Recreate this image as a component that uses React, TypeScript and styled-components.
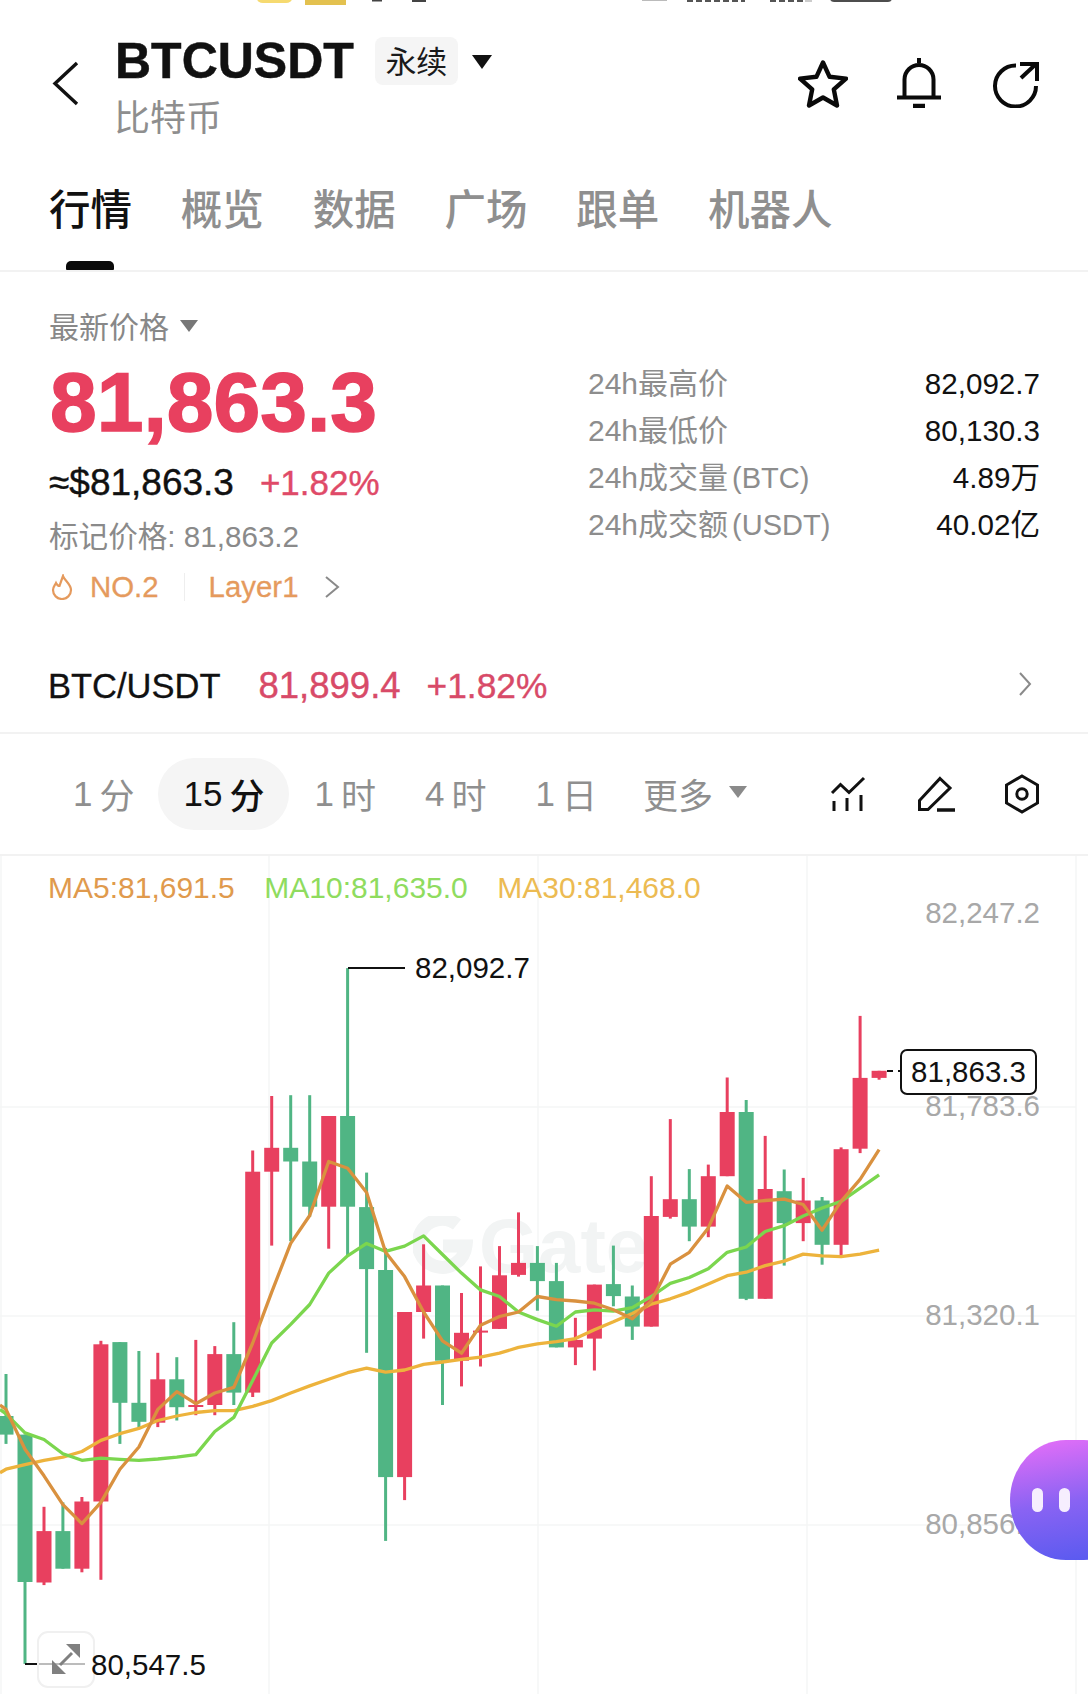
import React from "react";
import styled, { createGlobalStyle } from "styled-components";

const FONT = `"Liberation Sans", "Noto Sans CJK SC", sans-serif`;

const Global = createGlobalStyle`
  html, body { margin: 0; padding: 0; background: #fff; }
  body { font-family: ${FONT}; }
`;

const Page = styled.div`
  position: relative;
  width: 1088px;
  height: 1694px;
  overflow: hidden;
  background: #fff;
  color: #111;
`;

const Sliver = styled.svg`
  display: block;
  width: 1088px;
  height: 6px;
`;

const Header = styled.header`
  display: flex;
  align-items: flex-start;
  height: 135px;
  padding: 31px 48px 0 52px;
`;
const BackIcon = styled.svg`
  width: 28px;
  height: 45px;
  margin-top: 24px;
  flex: none;
`;
const TitleBlock = styled.div`
  margin-left: 35px;
`;
const TitleRow = styled.div`
  display: flex;
  align-items: center;
  height: 48px;
`;
const Symbol = styled.div`
  font-size: 50px;
  font-weight: 700;
  line-height: 48px;
  -webkit-text-stroke: 0.5px #111;
`;
const Kind = styled.div`
  display: flex;
  align-items: center;
  justify-content: center;
  width: 83px;
  height: 48px;
  padding-bottom: 3px;
  box-sizing: border-box;
  margin-left: 21px;
  border-radius: 8px;
  background: #f5f5f5;
  font-size: 31px;
  color: #1a1a1a;
`;
const Caret = styled.i<{ $size: number; $color: string }>`
  display: block;
  flex: none;
  width: 0;
  height: 0;
  border-left: ${(p) => p.$size}px solid transparent;
  border-right: ${(p) => p.$size}px solid transparent;
  border-top: ${(p) => Math.round(p.$size * 1.35)}px solid ${(p) => p.$color};
`;
const KindCaret = styled(Caret)`
  margin: 2px 0 0 14px;
`;
const Subtitle = styled.div`
  margin-top: 14px;
  margin-left: -1px;
  font-size: 36px;
  line-height: 40px;
  color: #8e8e8e;
`;
const Actions = styled.div`
  display: flex;
  gap: 46px;
  margin: 21px 0 0 auto;
`;
const ActionIcon = styled.svg`
  display: block;
  width: 50px;
  height: 50px;
`;

const Tabs = styled.nav`
  display: flex;
  gap: 48.8px;
  height: 83px;
  padding: 15px 0 0 49px;
  border-bottom: 2px solid #f2f2f2;
`;
const Tab = styled.div<{ $active?: boolean }>`
  display: flex;
  flex-direction: column;
  align-items: center;
  font-size: 41.500px;
  font-weight: 500;
  line-height: 48px;
  color: ${(p) => (p.$active ? "#111" : "#8f8f8f")};
`;
const TabMark = styled.span`
  display: block;
  width: 48px;
  height: 9px;
  margin: 26px 0 0 -2px;
  border-radius: 5px 5px 1px 1px;
  background: #0a0a0a;
`;

const Market = styled.section`
  display: flex;
  height: 368px;
  padding: 0 48px 0 49px;
`;
const MarketLeft = styled.div`
  width: 539px;
  flex: none;
`;
const PriceLabel = styled.div`
  display: flex;
  align-items: center;
  height: 40px;
  margin-top: 33px;
  font-size: 30px;
  color: #888;
`;
const LabelCaret = styled(Caret)`
  margin: 2px 0 0 11px;
`;
const BigPrice = styled.div`
  margin: 12px 0 0 1px;
  font-size: 84px;
  font-weight: 700;
  line-height: 90px;
  color: #e8405f;
  -webkit-text-stroke: 1.500px #e8405f;
`;
const FiatRow = styled.div`
  display: flex;
  align-items: baseline;
  gap: 26px;
  margin-top: 14px;
  font-size: 37px;
  line-height: 44px;
  -webkit-text-stroke: 0.4px currentColor;
`;
const Rise = styled.span`
  font-size: 35px;
  color: #df4a68;
`;
const MarkPrice = styled.div`
  margin-top: 12px;
  font-size: 29.600px;
  line-height: 40px;
  color: #8a8a8a;
`;
const TagRow = styled.div`
  display: flex;
  align-items: center;
  height: 34px;
  margin-top: 13px;
  font-size: 29.400px;
  color: #e59a5d;
  -webkit-text-stroke: 0.3px currentColor;
`;
const Flame = styled.svg`
  width: 24px;
  height: 26px;
  margin: 0 16px 0 1px;
  flex: none;
`;
const TagDivider = styled.span`
  width: 1px;
  height: 28px;
  margin: 0 24px 0 25px;
  background: #eee;
`;
const TagChevron = styled.svg`
  width: 16px;
  height: 22px;
  margin-left: 26px;
  flex: none;
`;
const Stats = styled.div`
  flex: 1;
  padding-top: 88px;
`;
const StatRow = styled.div`
  display: flex;
  justify-content: space-between;
  height: 47px;
  font-size: 29.600px;
  line-height: 47px;
`;
const StatLabel = styled.span`
  color: #8d8d8d;
  font-size: 30px;
`;
const StatUnit = styled.span`
  margin-left: 4px;
  font-size: 29px;
`;

const PairRow = styled.div`
  display: flex;
  align-items: center;
  height: 92px;
  padding: 0 56px 0 48px;
  border-bottom: 2px solid #f2f2f2;
  font-size: 34.500px;
`;
const PairName = styled.span`
  color: #111;
  -webkit-text-stroke: 0.3px #111;
`;
const PairPrice = styled.span`
  margin-left: 38px;
  font-size: 36.500px;
  color: #d84a68;
  -webkit-text-stroke: 0.4px #d84a68;
`;
const PairChange = styled.span`
  margin-left: 26px;
  font-size: 35.300px;
  color: #d84a68;
  -webkit-text-stroke: 0.4px #d84a68;
`;
const PairChevron = styled.svg`
  width: 14px;
  height: 24px;
  margin: -4px 0 0 auto;
`;

const Periods = styled.div`
  display: flex;
  align-items: center;
  gap: 1px;
  height: 120px;
  padding: 0 48px 0 49px;
  border-bottom: 2px solid #f2f2f2;
`;
const Period = styled.div<{ $active?: boolean; $last?: boolean }>`
  display: flex;
  align-items: center;
  height: 72px;
  box-sizing: border-box;
  padding: 0 ${(p) => (p.$active ? 25 : 24)}px 1px;
  margin-left: ${(p) => (p.$active ? "-1px" : p.$last ? "-3px" : "0")};
  border-radius: 36px;
  background: ${(p) => (p.$active ? "#f5f5f5" : "transparent")};
  color: ${(p) => (p.$active ? "#111" : "#8f8f8f")};
  font-size: 35px;
  font-weight: ${(p) => (p.$active ? 500 : 400)};
`;
const PeriodNum = styled.span`
  margin-right: 7px;
`;
const MoreCaret = styled(Caret)`
  margin: -3px 0 0 16px;
`;
const ToolIcons = styled.div`
  display: flex;
  gap: 51px;
  margin-left: auto;
`;
const ToolIcon = styled.svg`
  display: block;
  width: 36px;
  height: 36px;
  overflow: visible;
`;

const Chart = styled.section`
  position: relative;
  height: 838px;
`;
const ChartSvg = styled.svg`
  position: relative;
  z-index: 1;
  display: block;
  width: 1088px;
  height: 838px;
`;
const Watermark = styled.div`
  position: absolute;
  left: 413px;
  top: 360px;
  display: flex;
  align-items: center;
  gap: 6px;
  font-size: 76px;
  font-weight: 700;
  line-height: 60px;
  color: #f2f4f4;
`;
const WatermarkLogo = styled.svg`
  width: 60px;
  height: 60px;
`;
const Legend = styled.div`
  position: absolute;
  z-index: 2;
  left: 48px;
  top: 14px;
  display: flex;
  gap: 29.500px;
  font-size: 30px;
  line-height: 36px;
`;
const LegendItem = styled.span<{ $color: string }>`
  color: ${(p) => p.$color};
`;
const AxisLabel = styled.span<{ $y: number }>`
  position: absolute;
  z-index: 2;
  right: 48px;
  top: ${(p) => p.$y - 856 - 18}px;
  font-size: 29.500px;
  line-height: 36px;
  color: #a8a8a8;
`;
const ExtremeLabel = styled.span<{ $x: number; $y: number }>`
  position: absolute;
  z-index: 4;
  left: ${(p) => p.$x}px;
  top: ${(p) => p.$y - 856 - 18}px;
  font-size: 29.500px;
  line-height: 36px;
  color: #111;
`;
const PriceTag = styled.div`
  position: absolute;
  z-index: 3;
  left: 900px;
  top: 193px;
  display: flex;
  align-items: center;
  justify-content: center;
  width: 137px;
  height: 46px;
  box-sizing: border-box;
  border: 2px solid #111;
  border-radius: 7px;
  background: #fff;
  font-size: 29.500px;
`;
const Bot = styled.div`
  position: absolute;
  z-index: 4;
  left: 1010px;
  top: 584px;
  display: flex;
  gap: 16px;
  align-items: center;
  width: 130px;
  height: 120px;
  padding-left: 22px;
  box-sizing: border-box;
  border-radius: 56px / 60px;
  background: linear-gradient(170deg, #e96ff8 0%, #8a63f3 50%, #5359ef 100%);
`;
const BotEye = styled.span`
  width: 11px;
  height: 24px;
  border-radius: 6px;
  background: #f6eefe;
`;
const Expand = styled.div`
  position: absolute;
  z-index: 3;
  left: 37px;
  top: 775px;
  display: flex;
  align-items: center;
  justify-content: center;
  width: 58px;
  height: 57px;
  box-sizing: border-box;
  border: 2px solid #f0f0f0;
  border-radius: 11px;
  background: rgba(255, 255, 255, 0.72);
`;
const ExpandIcon = styled.svg`
  width: 32px;
  height: 32px;
  margin-top: -1px;
`;

type C = [string, number, number, number, number];
const candles: C[] = [
  ["g", 845, 940, 982, 1003],
  ["g", 982, 982, 1315, 1500],
  ["r", 1145, 1200, 1316, 1322],
  ["g", 1135, 1200, 1285, 1285],
  ["r", 1123, 1133, 1285, 1293],
  ["r", 770, 778, 1133, 1310],
  ["g", 773, 773, 910, 1003],
  ["g", 793, 910, 953, 965],
  ["r", 797, 857, 955, 965],
  ["g", 807, 857, 920, 950],
  ["r", 768, 915, 919, 938],
  ["r", 782, 800, 915, 938],
  ["g", 728, 800, 887, 915],
  ["r", 340, 388, 887, 897],
  ["r", 217, 334, 388, 555],
  ["g", 215, 334, 365, 545],
  ["g", 215, 365, 467, 490],
  ["r", 262, 262, 467, 562],
  ["g", -72, 262, 467, 578],
  ["g", 390, 468, 608, 797],
  ["g", 560, 610, 1078, 1222],
  ["r", 705, 705, 1078, 1130],
  ["r", 552, 645, 705, 765],
  ["g", 645, 645, 815, 915],
  ["r", 662, 752, 815, 873],
  ["r", 602, 747, 751, 828],
  ["r", 556, 622, 743, 743],
  ["r", 480, 594, 621, 625],
  ["g", 556, 594, 635, 702],
  ["g", 594, 635, 785, 785],
  ["r", 718, 768, 785, 825],
  ["r", 643, 643, 765, 837],
  ["g", 555, 642, 669, 692],
  ["g", 645, 670, 738, 768],
  ["r", 398, 488, 738, 738],
  ["r", 269, 450, 490, 494],
  ["g", 382, 450, 512, 545],
  ["r", 372, 398, 512, 536],
  ["r", 175, 253, 398, 398],
  ["g", 226, 253, 675, 678],
  ["r", 307, 427, 675, 675],
  ["g", 383, 432, 504, 600],
  ["r", 402, 453, 504, 545],
  ["g", 445, 453, 553, 598],
  ["r", 333, 337, 553, 580],
  ["r", 36, 176, 336, 346],
  ["r", 160, 160, 176, 180],
];

const ma5 = [925, 1015, 1075, 1140, 1183, 1135, 1060, 1010, 925, 885, 912, 888, 875, 775, 660, 550, 487, 365, 380, 435, 570, 625, 705, 770, 798, 735, 715, 705, 670, 677, 680, 685, 700, 720, 680, 597, 570, 515, 420, 457, 453, 450, 462, 520, 455, 405, 338];
const ma10 = [935, 978, 993, 1025, 1040, 1035, 1038, 1040, 1037, 1033, 1027, 975, 943, 860, 775, 733, 688, 617, 578, 550, 568, 556, 533, 575, 617, 655, 670, 705, 722, 737, 705, 700, 703, 695, 670, 640, 627, 607, 570, 558, 523, 510, 488, 470, 455, 425, 395];
const ma30 = [1060, 1050, 1040, 1033, 1020, 995, 980, 968, 950, 940, 932, 928, 928, 918, 905, 888, 872, 857, 842, 832, 841, 836, 823, 818, 812, 807, 798, 785, 777, 772, 765, 745, 727, 708, 687, 675, 660, 642, 623, 615, 600, 590, 574, 578, 580, 574, 565];

const sy = (v: number) => +(144 + v * 0.4426).toFixed(1);
const cx = (i: number) => +(6 + i * 18.98).toFixed(1);
const linePts = (start: number, vals: number[]) =>
  [`0,${sy(start)}`, ...vals.map((v, i) => `${cx(i)},${sy(v)}`)].join(" ");

const periods = [
  ["1", "分"],
  ["15", "分"],
  ["1", "时"],
  ["4", "时"],
  ["1", "日"],
];
const tabs = ["行情", "概览", "数据", "广场", "跟单", "机器人"];
const stats: [string, string, string][] = [
  ["24h最高价", "", "82,092.7"],
  ["24h最低价", "", "80,130.3"],
  ["24h成交量", "(BTC)", "4.89万"],
  ["24h成交额", "(USDT)", "40.02亿"],
];

export default function App() {
  return (
    <Page>
      <Global />
      <Sliver viewBox="0 0 1088 6">
        <rect x="257" y="-6" width="35" height="9" rx="6" fill="#f6da70" />
        <rect x="305" y="0" width="41" height="5" fill="#e3c14f" />
        <rect x="372" y="0" width="10" height="1.5" fill="#444" />
        <rect x="412" y="0" width="14" height="2" fill="#444" />
        <rect x="642" y="0" width="25" height="1" fill="#bbb" />
        <line x1="687" x2="745" y1="1" y2="1" stroke="#555" strokeWidth="2" strokeDasharray="6 3" />
        <line x1="770" x2="805" y1="1" y2="1" stroke="#555" strokeWidth="2" strokeDasharray="6 3" />
        <rect x="805" y="0" width="7" height="2" fill="#ccc" />
        <rect x="830" y="-6" width="62" height="8" rx="4" fill="#4d4d4d" />
      </Sliver>

      <Header>
        <BackIcon viewBox="0 0 28 45" fill="none" stroke="#111" strokeWidth="3.4">
          <path d="M25 2 3 22.500 25 43" />
        </BackIcon>
        <TitleBlock>
          <TitleRow>
            <Symbol>BTCUSDT</Symbol>
            <Kind>永续</Kind>
            <KindCaret $size={10} $color="#111" />
          </TitleRow>
          <Subtitle>比特币</Subtitle>
        </TitleBlock>
        <Actions>
          <ActionIcon viewBox="0 -1 50 50" fill="none" stroke="#0a0a0a" strokeWidth="4.4" strokeLinejoin="round">
            <path d="M25 3.500 31.600 17.800 48 19.600 35.800 30.400 39 46.500 25 38.500 11 46.500 14.200 30.400 2 19.600 18.400 17.800Z" />
          </ActionIcon>
          <ActionIcon viewBox="0 0 50 50" fill="none" stroke="#0a0a0a" strokeWidth="4">
            <path d="M25 0v5" />
            <path d="M10.500 39V21.500a14.500 14.500 0 0 1 29 0V39" />
            <path d="M3 39.500h44" />
            <path d="M19 48h12" strokeWidth="4.500" />
          </ActionIcon>
          <ActionIcon viewBox="0 0 50 50" fill="none" stroke="#0a0a0a" strokeWidth="4">
            <path d="M26 7.500A20.500 20.500 0 1 0 46 28" />
            <path d="M31 20 46 6" />
            <path d="M30 6h17v17" />
          </ActionIcon>
        </Actions>
      </Header>

      <Tabs>
        {tabs.map((t, i) => (
          <Tab key={t} $active={i === 0}>
            {t}
            {i === 0 && <TabMark />}
          </Tab>
        ))}
      </Tabs>

      <Market>
        <MarketLeft>
          <PriceLabel>
            最新价格
            <LabelCaret $size={9} $color="#777" />
          </PriceLabel>
          <BigPrice>81,863.3</BigPrice>
          <FiatRow>
            <span>≈$81,863.3</span>
            <Rise>+1.82%</Rise>
          </FiatRow>
          <MarkPrice>标记价格: 81,863.2</MarkPrice>
          <TagRow>
            <Flame viewBox="0 0 24 26" fill="none" stroke="#e59a5d" strokeWidth="2.200" strokeLinecap="round">
              <path d="M13 2c1 4 8 8 8 14a9 9 0 0 1-18 0c0-3 2-5 3-7 1 2 2 3 3.500 3 1-3 2-6 3.500-10Z" />
            </Flame>
            NO.2
            <TagDivider />
            Layer1
            <TagChevron viewBox="0 0 16 22" fill="none" stroke="#8a8a8a" strokeWidth="2">
              <path d="M2 1 14 11 2 21" />
            </TagChevron>
          </TagRow>
        </MarketLeft>
        <Stats>
          {stats.map(([label, unit, value]) => (
            <StatRow key={label}>
              <StatLabel>
                {label}
                {unit && <StatUnit>{unit}</StatUnit>}
              </StatLabel>
              <span>{value}</span>
            </StatRow>
          ))}
        </Stats>
      </Market>

      <PairRow>
        <PairName>BTC/USDT</PairName>
        <PairPrice>81,899.4</PairPrice>
        <PairChange>+1.82%</PairChange>
        <PairChevron viewBox="0 0 14 24" fill="none" stroke="#8a8a8a" strokeWidth="2">
          <path d="M2 1 12 12 2 23" />
        </PairChevron>
      </PairRow>

      <Periods>
        {periods.map(([n, u], i) => (
          <Period key={n + u} $active={i === 1}>
            <PeriodNum>{n}</PeriodNum>
            {u}
          </Period>
        ))}
        <Period $last>
          更多
          <MoreCaret $size={9} $color="#8a8a8a" />
        </Period>
        <ToolIcons>
          <ToolIcon viewBox="0 0 36 36" fill="none" stroke="#111" strokeWidth="3">
            <path d="M2 17 10.500 8.500 19 16.500 34 2" />
            <path d="M4 25v10M17 22v13M31 19v16" />
          </ToolIcon>
          <ToolIcon viewBox="0 0 36 36" fill="none" stroke="#111" strokeWidth="3">
            <path d="M23 2.500 33 12 11 33.500H2.500V24.500Z" />
            <path d="M20 34h18" strokeWidth="3.500" />
          </ToolIcon>
          <ToolIcon viewBox="0 0 36 36" fill="none" stroke="#111" strokeWidth="3">
            <path d="M18 0 33.500 9V27L18 36 2.500 27V9Z" />
            <circle cx="18" cy="18" r="5.200" />
          </ToolIcon>
        </ToolIcons>
      </Periods>

      <Chart>
        <Watermark>
          <WatermarkLogo viewBox="0 0 60 60" fill="none" stroke="#f2f4f4" strokeWidth="13">
            <path d="M44 8.500A24 24 0 1 0 53 30H30" />
          </WatermarkLogo>
          Gate
        </Watermark>
        {[
          ["82,247.2", 913],
          ["81,783.6", 1106],
          ["81,320.1", 1315],
          ["80,856.5", 1524],
        ].map(([t, y]) => (
          <AxisLabel key={t} $y={y as number}>
            {t}
          </AxisLabel>
        ))}
        <ChartSvg viewBox="0 0 1088 838">
          <g stroke="#f4f6f6" strokeWidth="1.500">
            {[1, 269, 538, 807, 1076].map((x) => (
              <line key={x} x1={x} x2={x} y1="0" y2="838" />
            ))}
            {[251, 460, 669].map((y) => (
              <line key={y} x1="0" x2="1076" y1={y} y2={y} />
            ))}
          </g>
          {candles.map(([c, wt, bt, bb, wb], i) => {
            const fill = c === "r" ? "#e8405f" : "#50b584";
            const x = cx(i);
            return (
              <g key={i} fill={fill}>
                <rect x={x - 1.5} y={sy(wt)} width="3" height={sy(wb) - sy(wt)} />
                <rect x={x - 7.5} y={sy(bt)} width="15" height={Math.max(sy(bb) - sy(bt), 2)} />
              </g>
            );
          })}
          <g fill="none" strokeWidth="3.300" strokeLinejoin="round">
            <polyline points={linePts(1068, ma30)} stroke="#edb33c" />
            <polyline points={linePts(925, ma10)} stroke="#7bd64e" />
            <polyline points={linePts(915, ma5)} stroke="#d9913f" />
          </g>
          <g stroke="#111" strokeWidth="2" fill="none">
            <path d="M348 112H405" />
            <path d="M25 808H85" />
            <path d="M887 215h6M898 215h2" />
          </g>
        </ChartSvg>
        <Legend>
          <LegendItem $color="#e09a4d">MA5:81,691.5</LegendItem>
          <LegendItem $color="#8fdc5f">MA10:81,635.0</LegendItem>
          <LegendItem $color="#ecbb52">MA30:81,468.0</LegendItem>
        </Legend>
        <ExtremeLabel $x={415} $y={968}>82,092.7</ExtremeLabel>
        <ExtremeLabel $x={91} $y={1665}>80,547.5</ExtremeLabel>
        <PriceTag>81,863.3</PriceTag>
        <Expand>
          <ExpandIcon viewBox="0 0 32 32" fill="#808080" stroke="#808080">
            <path d="M30 1v14L16 1Z" strokeWidth="0" />
            <path d="M2 31V17l14 14Z" strokeWidth="0" />
            <path d="M22 10 10 22" strokeWidth="3" fill="none" />
          </ExpandIcon>
        </Expand>
        <Bot>
          <BotEye />
          <BotEye />
        </Bot>
      </Chart>
    </Page>
  );
}
